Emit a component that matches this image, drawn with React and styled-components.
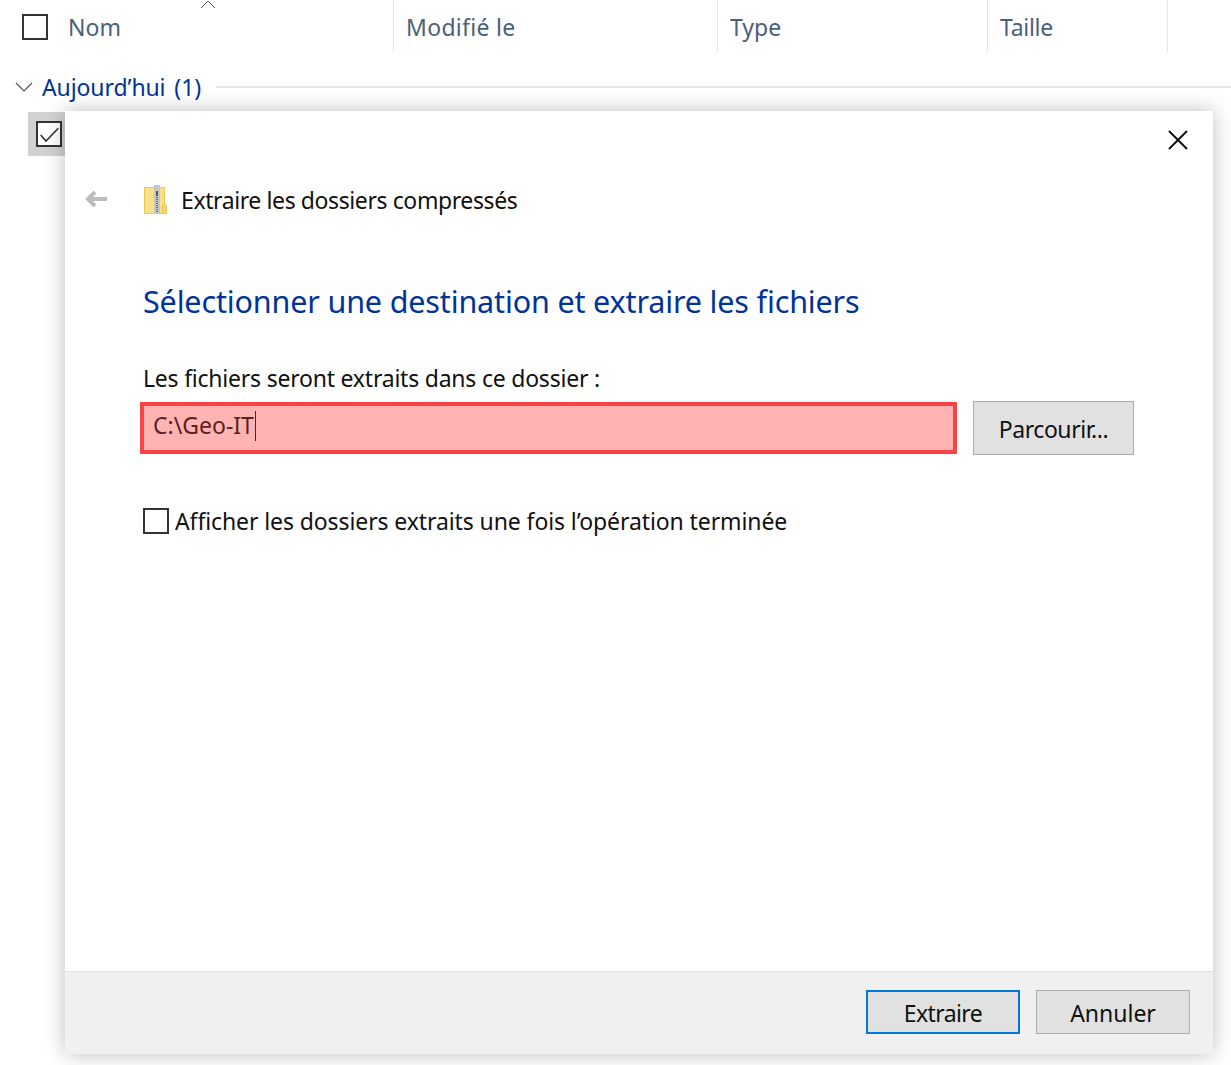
import React from "react"
import styled, { createGlobalStyle } from "styled-components"

const GlobalStyle = createGlobalStyle`
  html, body {
    margin: 0;
    padding: 0;
    background: #fff;
    font-family: "Noto Sans", "Open Sans", sans-serif;
    overflow: hidden;
  }
`

const Page = styled.div`
  position: relative;
  width: 1231px;
  height: 1065px;
  overflow: hidden;
  background: #fff;
`

const ColumnHeader = styled.div`
  position: relative;
  display: grid;
  grid-template-columns: 394px 324px 270px 180px;
  height: 52px;
`

const SortCaret = styled.svg`
  position: absolute;
  left: 200px;
  top: 0;
`

const Column = styled.div`
  display: flex;
  align-items: center;
  height: 52px;
  padding: 2px 0 0 ${p => p.$indent}px;
  box-sizing: border-box;
  border-right: 1px solid #e5e5e5;
  color: #4c607a;
  font-size: 23px;
  letter-spacing: ${p => p.$spacing || 0}px;
`

const Box = styled.span`
  display: inline-flex;
  align-items: center;
  justify-content: center;
  flex: none;
  box-sizing: border-box;
  width: 26px;
  height: 26px;
  border: 2px solid #333;
  background: #fff;
`

const NameBox = styled(Box)`
  margin: 0 20px 0 -46px;
`

const GroupRow = styled.div`
  display: flex;
  align-items: center;
  height: 34px;
  margin-top: 18px;
  padding-left: 15px;
`

const GroupTitle = styled.span`
  margin-left: 9px;
  color: #003399;
  font-size: 23px;
  white-space: pre;
  letter-spacing: -0.1px;
  word-spacing: 3px;
`

const GroupLine = styled.span`
  flex: 1;
  height: 2px;
  margin-left: 15px;
  background: #e5e5e5;
`

const SelectedCell = styled.div`
  display: flex;
  align-items: center;
  box-sizing: border-box;
  width: 40px;
  height: 44px;
  margin: 8px 0 0 28px;
  padding-left: 8px;
  background: #d2d2d2;
`

const Dialog = styled.div`
  position: absolute;
  left: 65px;
  top: 111px;
  display: flex;
  flex-direction: column;
  box-sizing: border-box;
  width: 1148px;
  height: 943px;
  background: #fff;
  box-shadow: 0 0 20px rgba(0, 0, 0, 0.26);
`

const DialogBody = styled.div`
  flex: 1;
  display: flex;
  flex-direction: column;
  padding: 0 79px 0 78px;
`

const CloseRow = styled.div`
  display: flex;
  justify-content: flex-end;
  height: 58px;
  padding: 18px 0 0;
  margin-right: -55px;
  box-sizing: border-box;
`

const NavRow = styled.div`
  display: flex;
  align-items: center;
  height: 32px;
  margin-top: 15px;
`

const BackArrow = styled.svg`
  margin: -2px 35px 0 -59px;
`

const WizardTitle = styled.span`
  margin-left: 13px;
  color: #111;
  font-size: 23px;
  letter-spacing: -0.4px;
  white-space: nowrap;
`

const Heading = styled.h1`
  margin: 62px 0 0;
  color: #003399;
  font-size: 30.5px;
  font-weight: 400;
  line-height: 46px;
  letter-spacing: -0.15px;
  white-space: nowrap;
`

const FieldLabel = styled.div`
  margin-top: 38px;
  color: #111;
  font-size: 23px;
  line-height: 32px;
  letter-spacing: -0.22px;
`

const PathRow = styled.div`
  display: flex;
  align-items: flex-start;
  justify-content: space-between;
  margin: 7px 0 0 -3px;
`

const PathInput = styled.div`
  display: flex;
  align-items: center;
  box-sizing: border-box;
  width: 817px;
  height: 52px;
  margin-top: 1px;
  padding: 0 0 6px 9px;
  border: 4px solid #f94444;
  background: #ffb3b3;
  color: #5d1f1f;
  font-size: 23px;
`

const Caret = styled.span`
  width: 1px;
  height: 30px;
  margin: 2px 0 0 1px;
  background: #5d1f1f;
`

const Button = styled.button`
  box-sizing: border-box;
  width: ${p => p.$width}px;
  height: ${p => p.$height}px;
  padding: 1px 0 0;
  border: ${p => (p.$primary ? "2px solid #0078d7" : "1px solid #adadad")};
  background: #e1e1e1;
  color: #111;
  font-family: inherit;
  font-size: 23px;
  letter-spacing: ${p => p.$spacing || 0}px;
`

const CheckRow = styled.label`
  display: flex;
  align-items: center;
  margin-top: 50px;
  color: #111;
  font-size: 23px;
  line-height: 32px;
  letter-spacing: -0.1px;
  white-space: nowrap;
`

const CheckLabel = styled.span`
  margin-left: 6px;
`

const Footer = styled.div`
  display: flex;
  justify-content: flex-end;
  gap: 16px;
  box-sizing: border-box;
  height: 83px;
  padding: 18px 23px 0 0;
  border-top: 1px solid #dfdfdf;
  background: #f0f0f0;
`

const ZipFolder = () => (
  <svg width="25" height="30" viewBox="0 0 25 30">
    <rect x="1.5" y="2.5" width="20" height="26" fill="#fbe08a" stroke="#eac84e" />
    <rect x="11" y="0" width="6" height="29" fill="#c6c6c6" />
    <rect x="13" y="6" width="2" height="5" fill="#555" />
    <path d="M13.5 12v16M14.5 12v16" stroke="#6e6b52" strokeWidth="1" strokeDasharray="1 1" />
    <path d="M19.5 28.5v-8l2-2 2 2v8z" fill="#fbd66a" stroke="#eac84e" />
  </svg>
)

const App = () => (
  <Page>
    <GlobalStyle />
    <ColumnHeader>
      <SortCaret width="16" height="10" viewBox="0 0 16 10">
        <path d="M1 8l7-7 7 7" fill="none" stroke="#555" strokeWidth="1" />
      </SortCaret>
      <Column $indent={68}>
        <NameBox />
        Nom
      </Column>
      <Column $indent={12} $spacing={0.3}>Modifié le</Column>
      <Column $indent={12}>Type</Column>
      <Column $indent={12} $spacing={-0.3}>Taille</Column>
    </ColumnHeader>

    <GroupRow>
      <svg width="18" height="10" viewBox="0 0 18 10">
        <path d="M1 1l8 8 8-8" fill="none" stroke="#555" strokeWidth="1.2" />
      </svg>
      <GroupTitle>Aujourd’hui (1)</GroupTitle>
      <GroupLine />
    </GroupRow>

    <SelectedCell>
      <Box>
        <svg width="20" height="18" viewBox="0 0 20 18">
          <path d="M1.7 10L7 16 19.3 3.3" fill="none" stroke="#333" strokeWidth="1.6" />
        </svg>
      </Box>
    </SelectedCell>

    <Dialog>
      <DialogBody>
        <CloseRow>
          <svg width="22" height="22" viewBox="0 0 22 22">
            <path d="M2 2l18 18M20 2L2 20" stroke="#111" strokeWidth="2" />
          </svg>
        </CloseRow>
        <NavRow>
          <BackArrow width="24" height="20" viewBox="0 0 24 20">
            <path d="M11 3l-7 7 7 7M4 10h19" fill="none" stroke="#bdbdbd" strokeWidth="4" />
          </BackArrow>
          <ZipFolder />
          <WizardTitle>Extraire les dossiers compressés</WizardTitle>
        </NavRow>
        <Heading>Sélectionner une destination et extraire les fichiers</Heading>
        <FieldLabel>Les fichiers seront extraits dans ce dossier :</FieldLabel>
        <PathRow>
          <PathInput>
            C:\Geo-IT
            <Caret />
          </PathInput>
          <Button $width={161} $height={54} $spacing={-0.45}>Parcourir...</Button>
        </PathRow>
        <CheckRow>
          <Box />
          <CheckLabel>Afficher les dossiers extraits une fois l’opération terminée</CheckLabel>
        </CheckRow>
      </DialogBody>
      <Footer>
        <Button $primary $width={154} $height={44} $spacing={-0.6}>Extraire</Button>
        <Button $width={154} $height={44}>Annuler</Button>
      </Footer>
    </Dialog>
  </Page>
)

export default App
